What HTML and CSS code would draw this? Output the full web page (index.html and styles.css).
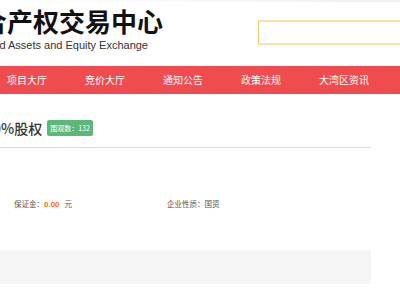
FILE: index.html
```html
<!DOCTYPE html>
<html lang="zh-CN">
<head>
    <meta charset="UTF-8">
    <meta name="viewport" content="width=device-width, initial-scale=1.0">
    <title>广东联合产权交易中心</title>
    <link rel="stylesheet" href="styles.css">
</head>
<body>
    <div class="topline"></div>
    <div class="header">
        <div class="logo">
            <div class="logo_cn"><span>广东联合产权交易中心</span></div>
            <div class="logo_en"><span>Guangdong United Assets and Equity Exchange</span></div>
        </div>
        <div class="search"></div>
    </div>

    <div class="nav">
        <a class="nav_item">项目大厅</a>
        <a class="nav_item">竞价大厅</a>
        <a class="nav_item">通知公告</a>
        <a class="nav_item">政策法规</a>
        <a class="nav_item">大湾区资讯</a>
    </div>

    <div class="main">
        <div class="title_bar">
            <h1 class="title">0%股权</h1>
            <span class="badge">围观数：132</span>
        </div>

        <div class="info">
            <div class="field field_first">保证金：<b class="money">0.00</b><span class="unit">元</span></div>
            <div class="field">企业性质：国资</div>
        </div>

        <div class="panel"></div>
    </div>

    <div class="footer"></div>
</body>
</html>
```
FILE: styles.css
```css
* {
    padding: 0;
    margin: 0;
    box-sizing: border-box;
}

body {
    width: 400px;
    overflow: hidden;
    background-color: #fff;
    font-family: "Noto Sans CJK SC", sans-serif;
    color: #333;
}

.topline {
    height: 2px;
    background: linear-gradient(to right, #fff, #f0f0f0);
}

.header {
    display: flex;
    height: 64px;
    padding-top: 6px;
}

.logo {
    width: 163px;
    flex-shrink: 0;
}

.logo_cn,
.logo_en {
    display: flex;
    justify-content: flex-end;
    white-space: nowrap;
}

.logo_cn {
    width: 163px;
    height: 26px;
    font-size: 26px;
    line-height: 26px;
    font-weight: bold;
    color: #111;
}

.logo_en {
    width: 148px;
    margin-top: 5px;
    font-family: "Liberation Sans", Arial, sans-serif;
    font-size: 11px;
    line-height: 13px;
    color: #333;
}

.search {
    flex-shrink: 0;
    width: 200px;
    height: 25px;
    margin-left: 95px;
    margin-top: 12px;
    border: 2px solid #fbe3aa;
    border-left: 1px solid #f5c96c;
    background-color: #fff;
}

/* 메뉴 */
.nav {
    display: flex;
    gap: 38px;
    height: 28px;
    padding-left: 7px;
    background-color: #f04b4f;
}

.nav_item {
    font-size: 10px;
    line-height: 28px;
    color: #fff;
    white-space: nowrap;
    cursor: pointer;
}

.main {
    width: 371px;
}

.title_bar {
    display: flex;
    align-items: center;
    padding: 24px 0 9px;
    border-bottom: 1px solid #dcdcdc;
}

.title {
    height: 20px;
    margin-left: -7px;
    font-size: 14px;
    line-height: 20px;
    font-weight: 500;
    color: #333;
    white-space: nowrap;
}

.badge {
    height: 16px;
    margin-left: 5px;
    padding: 0 3px;
    border-radius: 2px;
    background-color: #5cb878;
    color: #fff;
    font-size: 7px;
    line-height: 16px;
    white-space: nowrap;
}

.info {
    display: flex;
    margin-top: 50px;
    padding-left: 14px;
}

.field {
    font-size: 7.5px;
    line-height: 12px;
    color: #555;
    white-space: nowrap;
}

.field_first {
    width: 153px;
}

.money {
    font-family: "Liberation Sans", Arial, sans-serif;
    font-size: 8px;
    color: #ff6a00;
}

.unit {
    margin-left: 5px;
}

.panel {
    height: 34px;
    margin-top: 39px;
    background-color: #f5f5f5;
}

.footer {
    height: 10px;
    margin-top: 16px;
    border-top: 1px solid #d4d4d4;
}
```
